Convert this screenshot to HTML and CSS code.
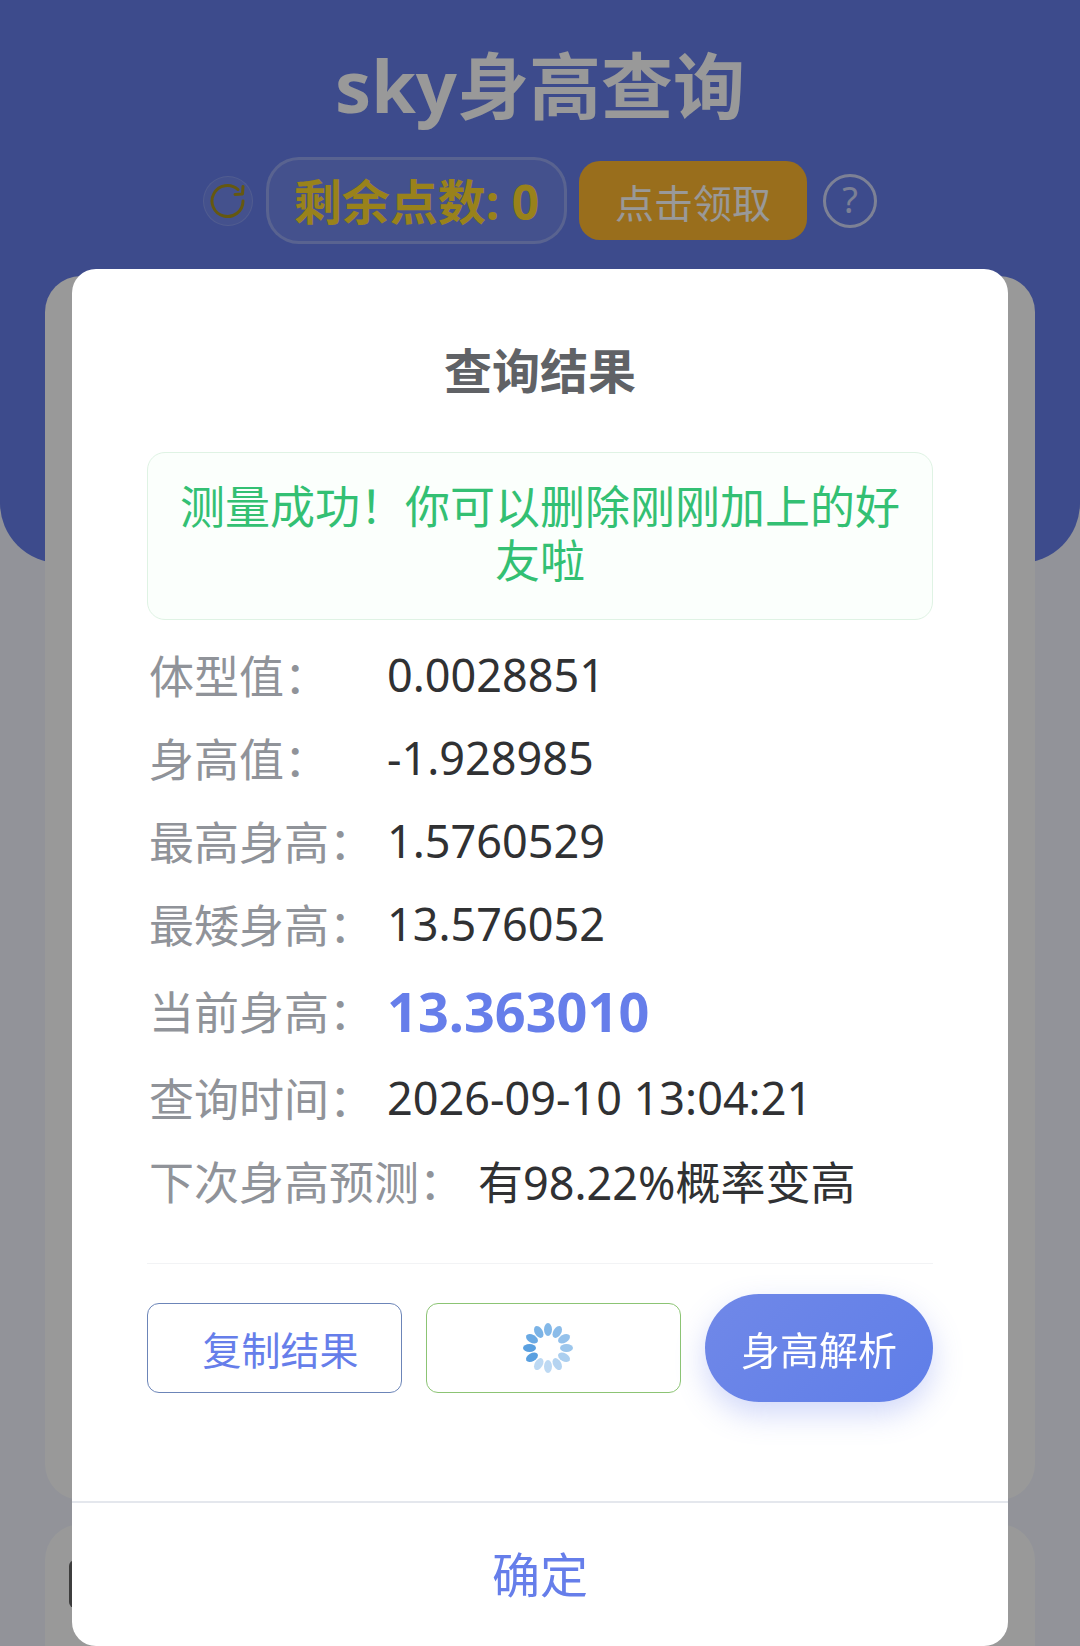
FILE: index.html
```html
<!DOCTYPE html>
<html lang="zh-CN">
<head>
    <meta charset="UTF-8">
    <meta name="viewport" content="width=device-width, initial-scale=1.0">
    <title>sky身高查询</title>
    <link rel="stylesheet" href="styles.css">
</head>
<body>
    <div class="page">
        <header class="header">
            <h1 class="title">sky身高查询</h1>
            <div class="points-row">
                <span class="refresh">
                    <svg width="38" height="38" viewBox="0 0 38 38" fill="none" stroke="#a8931c" stroke-width="3" stroke-linecap="round" stroke-linejoin="round">
                        <path d="M34 19a15.500 15.500 0 1 1-5-11.400"/>
                        <path d="M34 4.500 33.500 12 26 12.500"/>
                    </svg>
                </span>
                <div class="points">剩余点数: 0</div>
                <button class="claim" type="button">点击领取</button>
                <span class="help">?</span>
            </div>
        </header>
        <div class="card card-main"></div>
        <div class="card card-next"><span class="card-input"></span></div>
    </div>

    <div class="overlay"></div>

    <div class="modal">
        <h2 class="modal-title">查询结果</h2>
        <div class="modal-body">
            <div class="notice">测量成功！你可以删除刚刚加上的好友啦</div>
            <div class="row"><span class="label">体型值：</span><span class="value">0.0028851</span></div>
            <div class="row"><span class="label">身高值：</span><span class="value">-1.928985</span></div>
            <div class="row"><span class="label">最高身高：</span><span class="value">1.5760529</span></div>
            <div class="row"><span class="label">最矮身高：</span><span class="value">13.576052</span></div>
            <div class="row row-now"><span class="label">当前身高：</span><span class="value value-now">13.363010</span></div>
            <div class="row"><span class="label">查询时间：</span><span class="value">2026-09-10 13:04:21</span></div>
            <div class="row"><span class="label label-auto">下次身高预测：</span><span class="value">有98.22%概率变高</span></div>
            <div class="actions">
                <button class="btn btn-copy" type="button">复制结果</button>
                <button class="btn btn-load" type="button">
                    <svg class="spinner" width="50" height="50" viewBox="0 0 50 50">
                        <g fill="#5aa0e0">
                            <ellipse cx="25" cy="6.500" rx="4" ry="6.500" opacity=".75"/>
                            <ellipse cx="25" cy="6.500" rx="4" ry="6.500" opacity=".7" transform="rotate(30 25 25)"/>
                            <ellipse cx="25" cy="6.500" rx="4" ry="6.500" opacity=".65" transform="rotate(60 25 25)"/>
                            <ellipse cx="25" cy="6.500" rx="4" ry="6.500" opacity=".6" transform="rotate(90 25 25)"/>
                            <ellipse cx="25" cy="6.500" rx="4" ry="6.500" opacity=".5" transform="rotate(120 25 25)"/>
                            <ellipse cx="25" cy="6.500" rx="4" ry="6.500" opacity=".45" transform="rotate(150 25 25)"/>
                            <ellipse cx="25" cy="6.500" rx="4" ry="6.500" opacity=".4" transform="rotate(180 25 25)"/>
                            <ellipse cx="25" cy="6.500" rx="4" ry="6.500" opacity=".4" transform="rotate(210 25 25)"/>
                            <ellipse cx="25" cy="6.500" rx="4" ry="6.500" opacity="1" transform="rotate(240 25 25)"/>
                            <ellipse cx="25" cy="6.500" rx="4" ry="6.500" opacity="1" transform="rotate(270 25 25)"/>
                            <ellipse cx="25" cy="6.500" rx="4" ry="6.500" opacity=".9" transform="rotate(300 25 25)"/>
                            <ellipse cx="25" cy="6.500" rx="4" ry="6.500" opacity=".8" transform="rotate(330 25 25)"/>
                        </g>
                    </svg>
                </button>
                <button class="btn btn-primary" type="button">身高解析</button>
            </div>
        </div>
        <div class="modal-footer">确定</div>
    </div>
</body>
</html>
```

FILE: styles.css
```css
* {
    box-sizing: border-box;
}

html, body {
    height: 100%;
}

body {
    margin: 0;
    background-color: #f3f6ff;
    font-family: "Noto Sans", "Noto Sans CJK SC", sans-serif;
    overflow: hidden;
}

.page {
    height: 100%;
    overflow: hidden;
}

.header {
    height: 563px;
    padding-top: 40px;
    background-color: #667eea;
    border-radius: 0 0 60px 60px;
    text-align: center;
}

.title {
    margin: 0;
    font-size: 72px;
    line-height: 90px;
    font-weight: 700;
    color: #ffffff;
}

.points-row {
    display: flex;
    justify-content: center;
    align-items: center;
    margin-top: 27px;
}

.refresh {
    display: flex;
    justify-content: center;
    align-items: center;
    width: 50px;
    height: 50px;
    margin-right: 13px;
    border-radius: 50%;
    background-color: rgba(255, 255, 255, 0.08);
    border: 1px solid rgba(255, 255, 255, 0.15);
}

.points {
    width: 301px;
    height: 87px;
    line-height: 84px;
    border: 3px solid rgba(255, 255, 255, 0.25);
    border-radius: 33px;
    background-color: rgba(255, 255, 255, 0.08);
    font-size: 48px;
    font-weight: 700;
    color: #ffd92e;
    white-space: nowrap;
}

.claim {
    width: 228px;
    height: 79px;
    margin-left: 12px;
    border: none;
    border-radius: 21px;
    background-color: #ffb830;
    color: #ffffff;
    font-family: inherit;
    font-size: 39px;
}

.help {
    width: 54px;
    height: 54px;
    margin-left: 16px;
    border: 3px solid rgba(255, 255, 255, 0.7);
    border-radius: 50%;
    font-size: 36px;
    line-height: 46px;
    color: rgba(255, 255, 255, 0.7);
}

/* cards behind the dialog */
.card {
    position: absolute;
    left: 45px;
    right: 45px;
    background-color: #ffffff;
    border-radius: 36px;
}

.card-main {
    top: 276px;
    height: 1224px;
}

.card-next {
    top: 1524px;
    height: 300px;
}

.card-input {
    position: absolute;
    left: 24px;
    top: 36px;
    width: 12px;
    height: 48px;
    background-color: #666666;
    border-radius: 6px 0 0 6px;
}

.overlay {
    position: fixed;
    top: 0;
    right: 0;
    bottom: 0;
    left: 0;
    background-color: rgba(0, 0, 0, 0.4);
}

.modal {
    position: fixed;
    top: 269px;
    left: 72px;
    width: 936px;
    height: 1377px;
    display: flex;
    flex-direction: column;
    background-color: #ffffff;
    border-radius: 24px;
}

.modal-title {
    margin: 0;
    padding-top: 72px;
    height: 183px;
    font-size: 48px;
    line-height: 60px;
    font-weight: 700;
    text-align: center;
    color: #606266;
}

.modal-body {
    flex: 1;
    padding: 0 75px;
}

.notice {
    height: 168px;
    padding: 27px 30px;
    border: 1px solid #dff3e4;
    border-radius: 18px;
    background-color: #fbfffc;
    font-size: 45px;
    line-height: 54px;
    text-align: center;
    color: #33c073;
}

.row {
    display: flex;
    align-items: center;
    height: 83px;
    font-size: 45px;
}

.notice + .row {
    margin-top: 13px;
}

.row-now {
    height: 91px;
}

.label {
    flex: none;
    width: 240px;
    padding-left: 2px;
    color: #909399;
}

.label-auto {
    width: 331px;
}

.value {
    color: #303133;
}

.value-now {
    font-size: 54px;
    font-weight: 700;
    color: #667eea;
}

.actions {
    display: flex;
    align-items: center;
    gap: 24px;
    margin-top: 41px;
    padding-top: 30px;
    border-top: 1px solid #f2f3f5;
}

.btn {
    width: 255px;
    height: 90px;
    padding: 0;
    background-color: #ffffff;
    border-radius: 12px;
    font-family: inherit;
    font-size: 39px;
}

.btn-copy {
    border: 1px solid #6c85b8;
    color: #667eea;
    padding-left: 12px;
}

.btn-load {
    border: 1px solid #8cc474;
    padding-right: 12px;
}

.spinner {
    display: block;
    margin: 0 auto;
}

.btn-primary {
    width: 228px;
    height: 108px;
    border: none;
    border-radius: 54px;
    background: linear-gradient(135deg, #7088e8, #5f7ee8);
    box-shadow: 0 12px 30px rgba(102, 126, 234, 0.3);
    color: #ffffff;
}

.modal-footer {
    height: 145px;
    border-top: 2px solid #e4e7ed;
    font-size: 48px;
    line-height: 143px;
    text-align: center;
    color: #667eea;
}
```
